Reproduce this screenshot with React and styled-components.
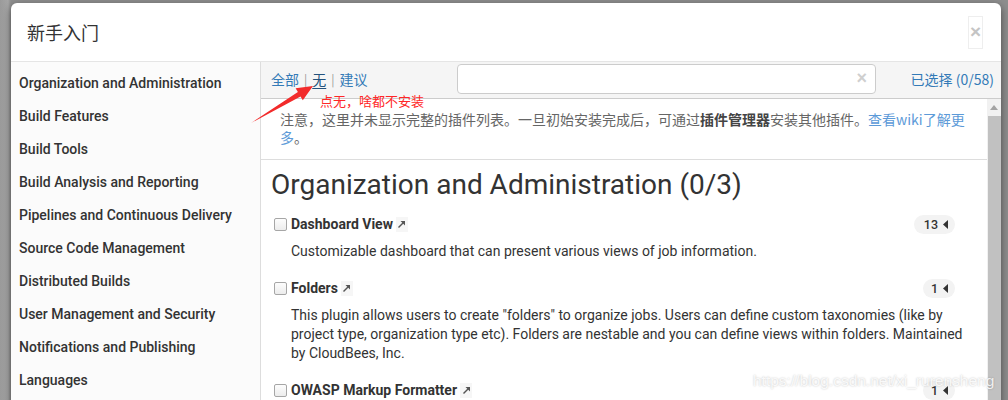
import React from 'react';
import styled, { createGlobalStyle } from 'styled-components';

const GlobalStyle = createGlobalStyle`
  html, body {
    margin: 0;
    padding: 0;
    background: #8e8e8e;
    overflow: hidden;
  }
  * {
    box-sizing: border-box;
  }
`;

const Page = styled.div`
  position: relative;
  height: 400px;
  overflow: hidden;
  padding: 3px 7px 0 11px;
  background: linear-gradient(to right, #9a9a9a 0, #a6a6a6 8px, #8e8e8e 11px, #8e8e8e 100%);
  font-family: Roboto, "Noto Sans CJK SC", sans-serif;
`;

const Modal = styled.div`
  position: relative;
  width: 990px;
  height: 420px;
  background: #fff;
  border-radius: 6px 6px 0 0;
  box-shadow: 0 3px 9px rgba(0, 0, 0, 0.5);
  display: flex;
  flex-direction: column;
  overflow: hidden;
`;

const Header = styled.div`
  height: 59px;
  flex: none;
  display: flex;
  align-items: center;
  justify-content: space-between;
  padding: 0 18px 0 16px;
  border-bottom: 1px solid #e5e5e5;
`;

const Title = styled.h4`
  margin: 0;
  font-family: "Noto Sans CJK SC", sans-serif;
  font-size: 18px;
  font-weight: 400;
  color: #333;
`;

const CloseButton = styled.div`
  width: 15px;
  height: 33px;
  border: 1px solid #eee;
  display: flex;
  align-items: center;
  justify-content: center;
  color: #c4c4c4;
  font-family: "Liberation Sans", sans-serif;
  font-size: 19px;
  font-weight: 700;
`;

const Body = styled.div`
  flex: 1;
  display: flex;
  min-height: 0;
`;

const Sidebar = styled.ul`
  width: 249px;
  flex: none;
  list-style: none;
  margin: 0;
  padding: 5px 0 0;
  background: #fbfbfb;
`;

const SideItem = styled.li`
  padding: 0 8px;
  line-height: 33px;
  font-size: 14px;
  font-weight: 500;
  color: #333;
  white-space: nowrap;
`;

const Main = styled.div`
  flex: 1;
  display: flex;
  flex-direction: column;
  border-left: 1px solid #ddd;
  min-width: 0;
`;

const Toolbar = styled.div`
  height: 37px;
  flex: none;
  display: grid;
  grid-template-columns: 186px 419px 1fr;
  align-items: center;
  padding: 0 7px 3px 10px;
  background: #f5f5f5;
  border-bottom: 1px solid #ccc;
`;

const Filters = styled.div`
  font-family: "Noto Sans CJK SC", sans-serif;
  font-size: 14px;
  display: flex;
  align-items: center;
  gap: 5px;
`;

const FilterLink = styled.span`
  text-decoration: ${p => (p.$active ? 'underline' : 'none')};
  text-underline-offset: 3px;
  color: ${p => (p.$active ? '#23527c' : '#337ab7')};
`;

const Sep = styled.span`
  color: #999;
  font-size: 12px;
`;

const Search = styled.div`
  height: 30px;
  border: 1px solid #ccc;
  border-radius: 4px;
  background: #fff;
  display: flex;
  align-items: center;
  justify-content: flex-end;
  padding-right: 8px;
  color: #cfcfcf;
  font-family: "Liberation Sans", sans-serif;
  font-size: 18px;
  font-weight: 700;
`;

const Selected = styled.div`
  justify-self: end;
  font-family: "Noto Sans CJK SC", sans-serif;
  font-size: 14px;
  color: #337ab7;
`;

const ContentRow = styled.div`
  flex: 1;
  display: flex;
  min-height: 0;
`;

const Content = styled.div`
  flex: 1;
  min-width: 0;
`;

const Notice = styled.p`
  margin: 0;
  padding: 11px 12px 13px 19px;
  border-bottom: 1px solid #ddd;
  font-family: "Noto Sans CJK SC", sans-serif;
  font-size: 14px;
  line-height: 18px;
  color: #666;

  b {
    color: #444;
  }

  span {
    color: #5c9ad8;
  }
`;

const Heading = styled.h1`
  margin: 8px 0 12px 10px;
  font-size: 28px;
  line-height: 34px;
  font-weight: 400;
  color: #333;
`;

const PluginList = styled.div`
  padding: 0 22px 0 13px;
`;

const Plugin = styled.div`
  margin-bottom: 17px;
`;

const NameRow = styled.div`
  height: 20px;
  display: flex;
  align-items: center;
  padding-right: 10px;
`;

const Checkbox = styled.span`
  width: 13px;
  height: 13px;
  border: 1px solid #a6a6a6;
  border-radius: 2px;
  background: linear-gradient(#fdfdfd, #ececec);
  margin-right: 4px;
`;

const Name = styled.span`
  font-size: 14px;
  font-weight: 700;
  color: #333;
`;

const Ext = styled.span`
  margin-left: 3px;
  width: 12px;
  height: 15px;
  background: #f6f6f6;
  display: flex;
  align-items: center;
  justify-content: center;
`;

const Badge = styled.span`
  margin-left: auto;
  height: 19px;
  padding: 0 7px 0 ${p => (p.$wide ? '10px' : '8px')};
  border-radius: 10px;
  background: #f3f3f3;
  display: flex;
  align-items: center;
  gap: 5px;
  font-size: 12.5px;
  font-weight: 500;
  color: #333;
`;

const Desc = styled.p`
  margin: 8px 0 0 17px;
  font-size: 14px;
  line-height: 19px;
  color: #333;
`;

const Scrollbar = styled.div`
  width: 14px;
  flex: none;
  background: #f1f1f1;
  display: flex;
  flex-direction: column;
  align-items: center;
`;

const ScrollArrow = styled.div`
  height: 17px;
  display: flex;
  align-items: center;
  justify-content: center;
`;

const Thumb = styled.div`
  width: 13px;
  flex: 1;
  background: #c1c1c1;
`;

const Note = styled.div`
  position: absolute;
  left: 309px;
  top: 89px;
  font-family: "Noto Sans CJK SC", sans-serif;
  font-size: 13px;
  line-height: 18px;
  color: #ff2727;
`;

const ArrowMark = styled.svg`
  position: absolute;
  left: 240px;
  top: 80px;
`;

const Watermark = styled.div`
  position: absolute;
  left: 753px;
  top: 372px;
  font-family: "Liberation Sans", sans-serif;
  font-size: 15.5px;
  color: rgba(255, 255, 255, 0.85);
  text-shadow: 0 0 2px rgba(0, 0, 0, 0.25);
  white-space: nowrap;
`;

const categories = [
  'Organization and Administration',
  'Build Features',
  'Build Tools',
  'Build Analysis and Reporting',
  'Pipelines and Continuous Delivery',
  'Source Code Management',
  'Distributed Builds',
  'User Management and Security',
  'Notifications and Publishing',
  'Languages',
];

const plugins = [
  {
    name: 'Dashboard View',
    count: 13,
    desc: 'Customizable dashboard that can present various views of job information.',
  },
  {
    name: 'Folders',
    count: 1,
    desc:
      'This plugin allows users to create "folders" to organize jobs. Users can define custom taxonomies (like by project type, organization type etc). Folders are nestable and you can define views within folders. Maintained by CloudBees, Inc.',
  },
  { name: 'OWASP Markup Formatter', count: 1, desc: '' },
];

const Caret = () => (
  <svg width="5" height="9" viewBox="0 0 5 9">
    <polygon points="5,0 5,9 0,4.5" fill="#333" />
  </svg>
);

const ExtIcon = () => (
  <svg width="9" height="9" viewBox="0 0 9 9">
    <path d="M1.5 7.5 L7 2" stroke="#555" strokeWidth="1.4" />
    <polygon points="3.5,1 8,1 8,5.5" fill="#555" />
  </svg>
);

const App = () => (
  <Page>
    <GlobalStyle />
    <Modal>
      <Header>
        <Title>新手入门</Title>
        <CloseButton>×</CloseButton>
      </Header>
      <Body>
        <Sidebar>
          {categories.map(c => (
            <SideItem key={c}>{c}</SideItem>
          ))}
        </Sidebar>
        <Main>
          <Toolbar>
            <Filters>
              <FilterLink>全部</FilterLink>
              <Sep>|</Sep>
              <FilterLink $active>无</FilterLink>
              <Sep>|</Sep>
              <FilterLink>建议</FilterLink>
            </Filters>
            <Search>×</Search>
            <Selected>已选择 (0/58)</Selected>
          </Toolbar>
          <ContentRow>
            <Content>
              <Notice>
                注意，这里并未显示完整的插件列表。一旦初始安装完成后，可通过<b>插件管理器</b>安装其他插件。
                <span>查看wiki了解更多</span>。
              </Notice>
              <Heading>Organization and Administration (0/3)</Heading>
              <PluginList>
                {plugins.map(p => (
                  <Plugin key={p.name}>
                    <NameRow>
                      <Checkbox />
                      <Name>{p.name}</Name>
                      <Ext>
                        <ExtIcon />
                      </Ext>
                      <Badge $wide={p.count > 9}>
                        {p.count}
                        <Caret />
                      </Badge>
                    </NameRow>
                    {p.desc && <Desc>{p.desc}</Desc>}
                  </Plugin>
                ))}
              </PluginList>
            </Content>
            <Scrollbar>
              <ScrollArrow>
                <svg width="8" height="5" viewBox="0 0 8 5">
                  <polygon points="0,5 8,5 4,0" fill="#a3a3a3" />
                </svg>
              </ScrollArrow>
              <Thumb />
            </Scrollbar>
          </ContentRow>
        </Main>
      </Body>
      <ArrowMark width="80" height="50" viewBox="0 0 80 50">
        <polygon
          points="0,40 46.9,9 44.6,5.2 62,3 51.8,17.2 49.5,13.4"
          fill="#f22b2b"
        />
      </ArrowMark>
      <Note>点无，啥都不安装</Note>
    </Modal>
    <Watermark>https://blog.csdn.net/xi_rurensheng</Watermark>
  </Page>
);

export default App;
